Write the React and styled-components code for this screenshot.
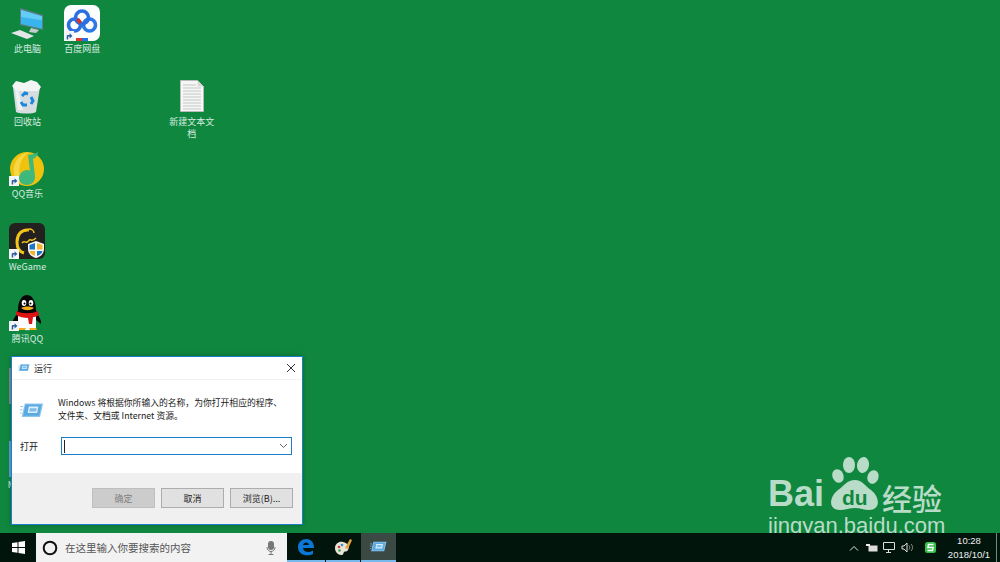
import React from 'react'
import styled, { createGlobalStyle } from 'styled-components'

const CJK = '"Noto Sans CJK SC", "Liberation Sans", sans-serif'
const UI = '"Liberation Sans", "Noto Sans CJK SC", sans-serif'

const Global = createGlobalStyle`
  html, body { margin: 0; padding: 0; height: 100%; overflow: hidden; }
  #root { height: 100%; }
`

const Screen = styled.div`
  width: 1000px;
  height: 562px;
  display: flex;
  flex-direction: column;
  font-family: ${UI};
  overflow: hidden;
`

const Desktop = styled.div`
  position: relative;
  flex: 1;
  background: #10873f;
  overflow: hidden;
`

const IconGrid = styled.div`
  display: grid;
  grid-template-columns: repeat(4, 54.8px);
  grid-template-rows: repeat(7, 72.6px);
  width: 220px;
`

const Item = styled.div`
  position: relative;
  display: flex;
  flex-direction: column;
  align-items: center;
  grid-column: ${p => p.$col};
  grid-row: ${p => p.$row};
  padding-top: 5px;
`

const Glyph = styled.div`
  position: relative;
  width: 36px;
  height: 36px;
  display: flex;
  align-items: center;
  justify-content: center;
  svg { display: block; }
`

const Label = styled.div`
  margin-top: 2px;
  width: 50px;
  text-align: center;
  font-family: ${CJK};
  font-size: 9px;
  line-height: 12.5px;
  color: #d6ece0;
`

const Shortcut = styled.span`
  position: absolute;
  left: 0;
  bottom: 0;
  width: 10px;
  height: 10px;
  background: #f4f6f8;
  display: flex;
  align-items: center;
  justify-content: center;
`

const ShortcutMark = () => (
  <Shortcut>
    <svg width="8" height="8" viewBox="0 0 7 7">
      <path d="M1.500 6.500V3.800C1.500 3 2 2.600 2.800 2.600H4V1l2.500 2.400L4 5.600V4H3.200C2.900 4 2.800 4.200 2.800 4.500v2z" fill="#2a5d9c" />
    </svg>
  </Shortcut>
)

const PcIcon = () => (
  <svg width="36" height="36" viewBox="0 0 36 36">
    <path d="M11 3l23 7v15L11 20z" fill="#5d7d88" />
    <path d="M12 5l21 6.200v12.600L12 19z" fill="#3ab4ee" />
    <path d="M12 5l21 6.200v4L12 12z" fill="#63cdf8" />
    <path d="M22 23l8 2-3 3-7-1z" fill="#c5ccd0" />
    <path d="M2 28l9-3 14 6-7 3z" fill="#e1e6e8" />
  </svg>
)

const PanIcon = () => (
  <svg width="36" height="36" viewBox="0 0 36 36">
    <rect width="36" height="36" rx="7" fill="#fdfefe" />
    <g fill="none" strokeWidth="3.600">
      <circle cx="10.500" cy="20" r="6" stroke="#2b6fe0" />
      <circle cx="25.500" cy="20" r="6" stroke="#2b7ae6" />
      <circle cx="18" cy="12.500" r="6.500" stroke="#2b6fe0" />
    </g>
    <path d="M12 15l3-2 3 4-3 2z" fill="#d8322e" />
    <rect x="12" y="33" width="6" height="3" fill="#e0352b" />
    <rect x="18" y="33" width="6" height="3" fill="#2c6de0" />
  </svg>
)

const BinIcon = () => (
  <svg width="36" height="36" viewBox="0 0 36 36">
    <path d="M4 9l3 25c4 2 17 2 20 0l4-25z" fill="#d6dde0" />
    <path d="M7 3l8 2 7-3 6 2 4 5-3 4H8L3 8z" fill="#f3f4f4" />
    <path d="M6 11l3 21h5L9 11z" fill="#eef1f2" />
    <g fill="none" stroke="#1c88dd" strokeWidth="3">
      <path d="M13 18l3-3 3 1" />
      <path d="M22 19l2 4-2 3" />
      <path d="M18 27h-4l-2-3" />
    </g>
  </svg>
)

const DocIcon = () => (
  <svg width="36" height="36" viewBox="0 0 36 36">
    <path d="M6.500 2.500h17l6 6v25h-23z" fill="#f6f6f6" stroke="#b7bcb9" />
    <path d="M23.500 2.500l6 6h-6z" fill="#d7d9d8" />
    <g stroke="#c4c6c5" strokeWidth="1">
      <path d="M9 7h13M9 10h18M9 13h18M9 16h18M9 19h18M9 22h18M9 25h18M9 28h18M9 31h18" />
    </g>
  </svg>
)

const MusicIcon = () => (
  <svg width="36" height="36" viewBox="0 0 36 36">
    <circle cx="18" cy="19" r="17" fill="#f0c20e" />
    <path d="M5 24C3 13 10 4 20 2 12 8 8 16 12 33 8 31 6 28 5 24z" fill="#f6d846" />
    <path d="M19 5l5-1c3 0 5-2 5-3 0 4-2 7-5 8l2 17c.5 5-3 9-8 9s-8-3-8-7 4-8 8-8c1.500 0 2.500.3 3 .7z" fill="#3fb87c" />
  </svg>
)

const WeGameIcon = () => (
  <svg width="36" height="36" viewBox="0 0 36 36">
    <rect width="36" height="36" rx="6" fill="#23211f" />
    <path d="M20 7C12 6 8 12 8 19c0 6 3 10 7 11" fill="none" stroke="#f3c319" strokeWidth="3" />
    <path d="M13 20c2-3 3 0 5-1s2-3 4-2 3 0 5-2" fill="none" stroke="#f3c319" strokeWidth="1.500" />
    <path d="M20 6c3 0 5 2 5 4" fill="none" stroke="#f3c319" strokeWidth="1.500" />
    <path d="M19 21l8-3 8 3v5c0 5-4 8-8 9-4-1-8-4-8-9z" fill="#f8f8f6" />
    <path d="M20.500 22l5.500-2v6.500h-5.500z" fill="#1d74c8" />
    <path d="M28 20l5.500 2v4.500H28z" fill="#f2b52a" />
    <path d="M20.500 28H26v5c-3-1-5-2.500-5.500-5z" fill="#f2b52a" />
    <path d="M28 28h5.500c-.5 2.500-2.500 4-5.500 5z" fill="#1d74c8" />
  </svg>
)

const QQIcon = () => (
  <svg width="36" height="36" viewBox="0 0 36 36">
    <path d="M9 15C9 6 13 0 18 0s9 6 9 15c1 5 6 9 5 14l-5-4-2 7H10l-2-5-5 3c0-6 5-9 6-15z" fill="#050505" />
    <path d="M9 19c4 2 14 2 18 0v14c-4 3-14 3-18 0z" fill="#fff" />
    <path d="M7 16c6 3 16 3 22 0l1 4c-3 2-5 2-6 2l-1 7h-3l-1-6c-4 0-9-1-12-3z" fill="#dc1414" />
    <ellipse cx="15" cy="8" rx="2.300" ry="3" fill="#fff" />
    <ellipse cx="22" cy="8" rx="2.300" ry="3" fill="#fff" />
    <circle cx="15.500" cy="8.500" r="1" fill="#000" />
    <circle cx="21.500" cy="8.500" r="1" fill="#000" />
    <path d="M12 13c4-2 9-2 13 0-4 3-9 3-13 0z" fill="#f3ae1b" />
    <path d="M10 33h7l-1 2h-6zM20 33h7l1 2h-7z" fill="#f3ae1b" />
  </svg>
)

const HiddenIcon = ({ color }) => (
  <svg width="36" height="36" viewBox="0 0 36 36">
    <rect width="36" height="36" fill={color} />
  </svg>
)

const RunGlyph = ({ size }) => (
  <svg width={size} height={size * 0.8} viewBox="0 0 30 24">
    <path d="M6 3h23l-4 17H2z" fill="#8ec6ee" />
    <path d="M7 4.500h20l-3 14H4z" fill="#5aa9e0" />
    <path d="M11 7h12l-1.500 8H9.500z" fill="#dcefff" />
    <path d="M12.500 9h8.500l-1 4h-8.500z" fill="#7fbdea" />
    <path d="M0 7h4M0 11h3M0 15h2" stroke="#8ec6ee" strokeWidth="1.200" />
  </svg>
)

const Window = styled.div`
  position: absolute;
  left: 11px;
  top: 356px;
  width: 292px;
  height: 169px;
  box-sizing: border-box;
  border: 1px solid #1a7fc7;
  background: #fff;
  box-shadow: 0 0 5px rgba(0, 0, 0, 0.25);
  display: flex;
  flex-direction: column;
  font-family: ${CJK};
  color: #1a1a1a;
`

const TitleBar = styled.div`
  height: 22px;
  flex-shrink: 0;
  display: flex;
  align-items: center;
  padding: 0 3px 0 6px;
  gap: 4px;
  font-size: 9px;
  border-bottom: 1px solid #f2f2f2;
`

const TitleText = styled.span`
  flex: 1;
  color: #333;
`

const CloseBtn = styled.div`
  width: 16px;
  height: 16px;
  display: flex;
  align-items: center;
  justify-content: center;
`

const WinBody = styled.div`
  flex: 1;
  display: flex;
  flex-direction: column;
  padding: 16px 10px 0 8px;
`

const Message = styled.div`
  display: flex;
  align-items: flex-start;
  gap: 14px;
`

const MessageIcon = styled.div`
  width: 24px;
  padding-top: 5px;
  svg { display: block; }
`

const MessageText = styled.div`
  font-size: 8.800px;
  line-height: 13px;
  white-space: nowrap;
`

const OpenRow = styled.div`
  display: flex;
  align-items: center;
  margin-top: 15px;
  font-size: 9px;
`

const OpenLabel = styled.div`
  width: 41px;
`

const Combo = styled.div`
  flex: 1;
  height: 18px;
  box-sizing: border-box;
  border: 1px solid #1a7fc7;
  display: flex;
  align-items: center;
  justify-content: space-between;
  padding: 0 3px 0 2px;
`

const Caret = styled.span`
  width: 1px;
  height: 13px;
  background: #222;
`

const WinFooter = styled.div`
  height: 51px;
  flex-shrink: 0;
  background: #f0f0f0;
  display: flex;
  justify-content: flex-end;
  gap: 6px;
  padding: 15px 9px 0 0;
  box-sizing: border-box;
`

const Btn = styled.div`
  width: 63px;
  height: 20px;
  box-sizing: border-box;
  border: 1px solid ${p => (p.$disabled ? '#bfbfbf' : '#adadad')};
  background: ${p => (p.$disabled ? '#cccccc' : '#e1e1e1')};
  color: ${p => (p.$disabled ? '#808080' : '#222')};
  font-size: 9px;
  display: flex;
  align-items: center;
  justify-content: center;
`

const Watermark = styled.div`
  position: absolute;
  left: 768px;
  top: 456px;
  width: 190px;
  color: #b9dcc8;
  font-family: "Liberation Sans", sans-serif;
`

const MarkRow = styled.div`
  display: flex;
  align-items: flex-end;
  height: 56px;
  white-space: nowrap;
  svg { display: block; flex-shrink: 0; margin-left: 3px; }
`

const MarkBai = styled.span`
  font-size: 36px;
  line-height: 36px;
  font-weight: bold;
`

const MarkCn = styled.span`
  font-family: ${CJK};
  font-size: 30px;
  line-height: 30px;
  font-weight: 500;
  margin-left: 1px;
`

const MarkUrl = styled.div`
  font-size: 22px;
  line-height: 22px;
  margin-top: 3px;
  white-space: nowrap;
`

const Taskbar = styled.div`
  height: 29px;
  flex-shrink: 0;
  background: #02150d;
  display: flex;
  align-items: stretch;
  position: relative;
`

const StartBtn = styled.div`
  width: 36px;
  display: flex;
  align-items: center;
  justify-content: center;
`

const SearchBox = styled.div`
  width: 251px;
  background: #f2f2f2;
  display: flex;
  align-items: center;
  padding: 0 10px 0 6px;
  box-sizing: border-box;
  font-family: ${CJK};
  font-size: 10.500px;
  color: #555;
`

const SearchText = styled.span`
  flex: 1;
  margin-left: 7px;
`

const TaskApp = styled.div`
  width: ${p => p.$w}px;
  display: flex;
  align-items: center;
  justify-content: center;
  background: ${p => (p.$active ? '#3a4944' : 'transparent')};
  border-bottom: 2px solid #76b9ed;
  box-sizing: border-box;
  margin: 0 ${p => (p.$gap ? 1 : 0)}px;
`

const Tray = styled.div`
  margin-left: auto;
  display: flex;
  align-items: center;
  color: #e6e6e6;
`

const TrayIcons = styled.div`
  display: flex;
  align-items: center;
  gap: 5px;
  margin-right: 6px;
  svg { display: block; }
  > :first-child { margin-right: 2px; }
  > :last-child { margin-left: 5px; }
`

const Clock = styled.div`
  width: 52px;
  text-align: center;
  font-family: "Liberation Sans", sans-serif;
  font-size: 9.500px;
  line-height: 14px;
  color: #eee;
`

const ShowDesktop = styled.div`
  width: 3px;
  height: 100%;
  margin-left: 1px;
  border-left: 1px solid #7b8682;
`

const icons = [
  { col: 1, row: 1, label: '此电脑', glyph: <PcIcon /> },
  { col: 2, row: 1, label: '百度网盘', glyph: <PanIcon />, shortcut: true },
  { col: 1, row: 2, label: '回收站', glyph: <BinIcon /> },
  { col: 4, row: 2, label: '新建文本文档', glyph: <DocIcon /> },
  { col: 1, row: 3, label: 'QQ音乐', glyph: <MusicIcon />, shortcut: true },
  { col: 1, row: 4, label: 'WeGame', glyph: <WeGameIcon />, shortcut: true },
  { col: 1, row: 5, label: '腾讯QQ', glyph: <QQIcon />, shortcut: true },
  { col: 1, row: 6, label: '', glyph: <HiddenIcon color="#7c8b90" /> },
  { col: 1, row: 7, label: 'Microsoft', glyph: <HiddenIcon color="#5f9fd0" /> },
]

export default function App() {
  return (
    <Screen>
      <Global />
      <Desktop>
        <IconGrid>
          {icons.map(icon => (
            <Item key={icon.col + '-' + icon.row} $col={icon.col} $row={icon.row}>
              <Glyph>
                {icon.glyph}
                {icon.shortcut && <ShortcutMark />}
              </Glyph>
              <Label>{icon.label}</Label>
            </Item>
          ))}
        </IconGrid>

        <Watermark>
          <MarkRow>
            <MarkBai>Bai</MarkBai>
            <svg width="54" height="56" viewBox="0 0 54 56">
              <g fill="#b9dcc8">
                <ellipse cx="11" cy="20" rx="5.500" ry="7" transform="rotate(-25 11 20)" />
                <ellipse cx="22" cy="9" rx="6" ry="8" />
                <ellipse cx="36" cy="9" rx="6" ry="8" transform="rotate(10 36 9)" />
                <ellipse cx="46" cy="21" rx="5.500" ry="7" transform="rotate(20 46 21)" />
                <path d="M28 24c7 0 10 6 16 10 9 7 10 20-2 20-5 0-9-2-14-2s-10 2-15 2C1 54 2 41 11 34c6-4 9-10 17-10z" />
              </g>
              <text x="15" y="49" fontFamily="Liberation Sans" fontWeight="bold" fontSize="21" fill="#10873f">du</text>
            </svg>
            <MarkCn>经验</MarkCn>
          </MarkRow>
          <MarkUrl>jingyan.baidu.com</MarkUrl>
        </Watermark>

        <Window>
          <TitleBar>
            <RunGlyph size={12} />
            <TitleText>运行</TitleText>
            <CloseBtn>
              <svg width="10" height="10" viewBox="0 0 10 10">
                <path d="M1 1l8 8M9 1l-8 8" stroke="#333" strokeWidth="1" />
              </svg>
            </CloseBtn>
          </TitleBar>
          <WinBody>
            <Message>
              <MessageIcon><RunGlyph size={24} /></MessageIcon>
              <MessageText>
                Windows 将根据你所输入的名称，为你打开相应的程序、<br />
                文件夹、文档或 Internet 资源。
              </MessageText>
            </Message>
            <OpenRow>
              <OpenLabel>打开</OpenLabel>
              <Combo>
                <Caret />
                <svg width="9" height="6" viewBox="0 0 9 6">
                  <path d="M1 1l3.500 3.500L8 1" fill="none" stroke="#666" strokeWidth="1" />
                </svg>
              </Combo>
            </OpenRow>
          </WinBody>
          <WinFooter>
            <Btn $disabled>确定</Btn>
            <Btn>取消</Btn>
            <Btn>浏览(B)...</Btn>
          </WinFooter>
        </Window>
      </Desktop>

      <Taskbar>
        <StartBtn>
          <svg width="13" height="13" viewBox="0 0 13 13">
            <path d="M0 2l5.500-.8V6H0zM6.500 1L13 0v6H6.500zM0 7h5.500v4.800L0 11zM6.500 7H13v6l-6.500-1z" fill="#fff" />
          </svg>
        </StartBtn>
        <SearchBox>
          <svg width="16" height="16" viewBox="0 0 16 16">
            <circle cx="8" cy="8" r="6.300" fill="none" stroke="#111" strokeWidth="2" />
          </svg>
          <SearchText>在这里输入你要搜索的内容</SearchText>
          <svg width="12" height="16" viewBox="0 0 12 16">
            <rect x="3" y="1" width="6" height="9" rx="3" fill="#777" />
            <path d="M2 7c0 6 8 6 8 0M6 11v3M3.500 14.500h5" fill="none" stroke="#777" strokeWidth="1" />
          </svg>
        </SearchBox>
        <TaskApp $w={38}>
          <svg width="18" height="18" viewBox="0 0 18 18">
            <path d="M1 9C1 4 5 1 9.500 1 14 1 17 4.500 17 10H6c.2 4.500 6.500 5 10 2.500v3.500c-6 3-15 1-15-7zM6 7h6c0-3.500-5.500-3.500-6 0z" fill="#0b78d8" />
          </svg>
        </TaskApp>
        <TaskApp $w={34} $gap>
          <svg width="20" height="20" viewBox="0 0 20 20">
            <path d="M2 11c0-4 4-7 8-6 5 1 7 5 5 8-1 2-3 1-4 2s0 3-3 3c-3 0-6-3-6-7z" fill="#e8e4d8" />
            <circle cx="6" cy="10" r="1.300" fill="#d8392b" />
            <circle cx="9" cy="8" r="1.300" fill="#2e8ad8" />
            <circle cx="6.500" cy="13.500" r="1.300" fill="#3aa54a" />
            <path d="M12 11l5-9 2 1-4 9z" fill="#e5a23a" />
          </svg>
        </TaskApp>
        <TaskApp $w={35} $active>
          <RunGlyph size={17} />
        </TaskApp>
        <Tray>
          <TrayIcons>
            <svg width="10" height="6" viewBox="0 0 10 6">
              <path d="M1 5.500l4-4 4 4" fill="none" stroke="#e6e6e6" strokeWidth="1" />
            </svg>
            <svg width="12" height="10" viewBox="0 0 12 10">
              <rect x="2.500" y="2.500" width="9" height="6" fill="#ddd" />
              <path d="M0 1h4v2H0z" fill="#eee" />
            </svg>
            <svg width="13" height="11" viewBox="0 0 13 11">
              <path d="M.5.500h11v7h-11zM3 10.500h5M5.500 8v2" fill="none" stroke="#ddd" />
            </svg>
            <svg width="13" height="11" viewBox="0 0 13 11">
              <path d="M1 4h2l3-3v9L3 7H1z" fill="none" stroke="#ddd" />
              <path d="M8 3.500c1 1 1 3 0 4M10 2c2 2 2 5 0 7" fill="none" stroke="#999" />
            </svg>
            <svg width="13" height="13" viewBox="0 0 13 13">
              <rect x="1" y="1" width="11" height="11" rx="2.500" fill="#36c24a" />
              <path d="M9.500 3.500h-5L4 6.500h5l-.5 3h-5" fill="none" stroke="#fff" strokeWidth="1.600" />
            </svg>
          </TrayIcons>
          <Clock>10:28<br />2018/10/1</Clock>
          <ShowDesktop />
        </Tray>
      </Taskbar>
    </Screen>
  )
}
